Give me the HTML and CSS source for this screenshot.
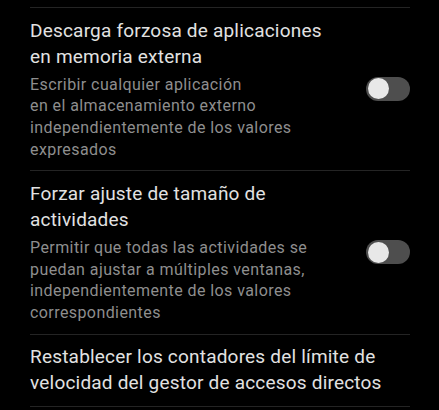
FILE: index.html
```html
<!DOCTYPE html>
<html lang="es">
<head>
<meta charset="utf-8">
<link rel="stylesheet" href="styles.css">
</head>
<body>
<div class="list">
  <div class="item">
    <div class="text">
      <div class="title">Descarga forzosa de aplicaciones<br>en memoria externa</div>
      <div class="summary">Escribir cualquier aplicación<br>en el almacenamiento externo<br>independientemente de los valores<br>expresados</div>
    </div>
    <div class="switch"><div class="thumb"></div></div>
  </div>
  <div class="item">
    <div class="text">
      <div class="title">Forzar ajuste de tamaño de<br>actividades</div>
      <div class="summary">Permitir que todas las actividades se<br>puedan ajustar a múltiples ventanas,<br>independientemente de los valores<br>correspondientes</div>
    </div>
    <div class="switch"><div class="thumb"></div></div>
  </div>
  <div class="item">
    <div class="text">
      <div class="title">Restablecer los contadores del límite de<br>velocidad del gestor de accesos directos</div>
    </div>
  </div>
</div>
</body>
</html>
```

FILE: styles.css
```css
html, body {
  margin: 0;
  padding: 0;
  background: #000;
}
body {
  font-family: Roboto, "Noto Sans", sans-serif;
  width: 439px;
  height: 410px;
  overflow: hidden;
}
.list {
  margin: 7px 29px 0 30px;
  border-top: 1px solid #242424;
}
.item {
  display: flex;
  align-items: center;
  justify-content: space-between;
  padding: 9.5px 0 10px;
  border-bottom: 1px solid #242424;
}
.text {
  flex: 1;
  min-width: 0;
}
.title {
  color: #e2e2e2;
  font-size: 19px;
  line-height: 26px;
  letter-spacing: 0.2px;
  white-space: nowrap;
}
.summary {
  color: #8e8e8e;
  font-size: 16px;
  line-height: 21.7px;
  letter-spacing: 0.42px;
  margin-top: 4px;
  white-space: nowrap;
}
.switch {
  flex: none;
  width: 44px;
  height: 24px;
  border-radius: 12px;
  background: #4e4e4e;
  display: flex;
  align-items: center;
  padding-left: 1.5px;
  box-sizing: border-box;
}
.thumb {
  width: 21px;
  height: 21px;
  border-radius: 50%;
  background: #e8e8e8;
}
```
